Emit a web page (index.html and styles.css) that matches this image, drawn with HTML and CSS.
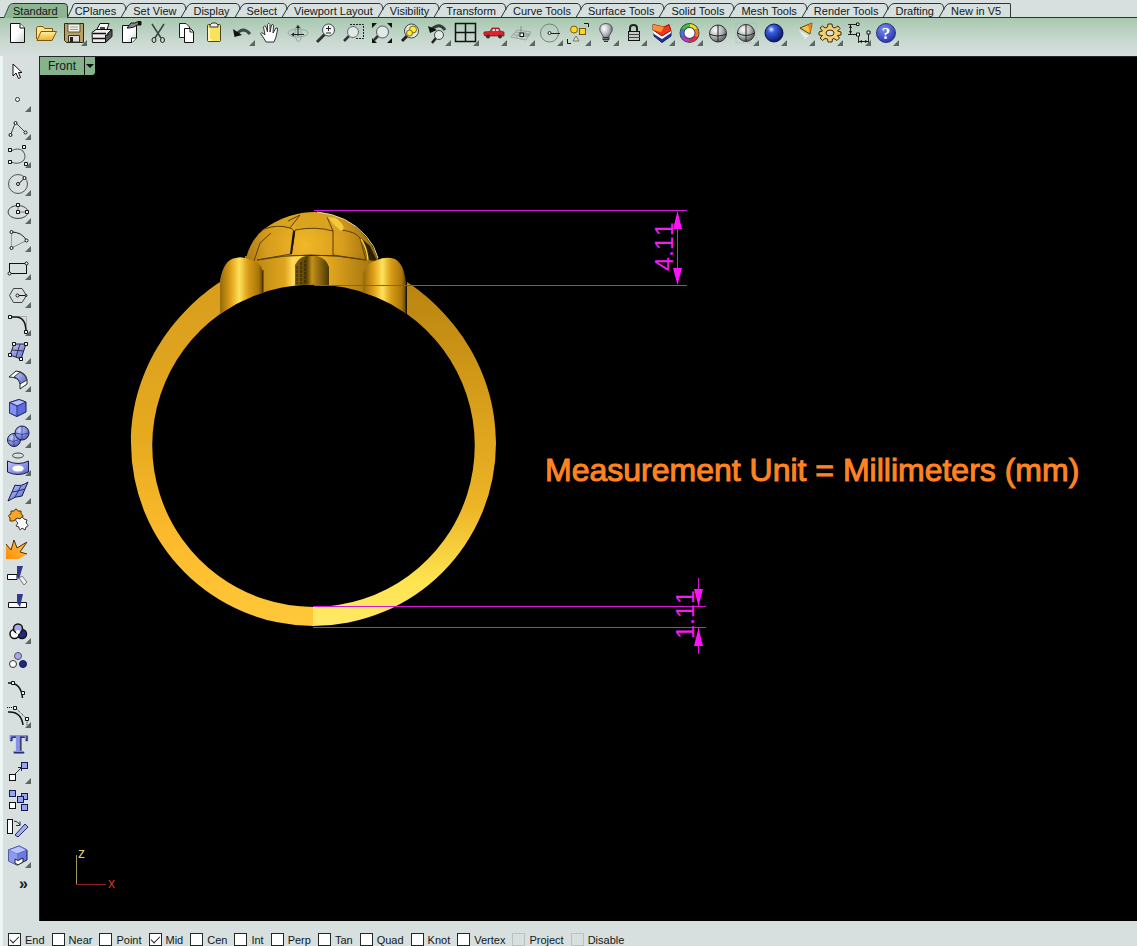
FILE: index.html
```html
<!DOCTYPE html>
<html lang="en">
<head>
<meta charset="utf-8">
<title>Front viewport</title>
<link rel="stylesheet" href="styles.css">
</head>
<body>
<svg class="defs" aria-hidden="true">
  <defs>
    <linearGradient id="blue" x1="0" y1="0" x2="1" y2="1"><stop offset="0" stop-color="#c3caff"/><stop offset="1" stop-color="#5964c8"/></linearGradient>
    <linearGradient id="folder" x1="0" y1="0" x2="0" y2="1"><stop offset="0" stop-color="#fff0a0"/><stop offset="1" stop-color="#eeb030"/></linearGradient>
    <linearGradient id="paper" x1="0" y1="0" x2="1" y2="1"><stop offset=".5" stop-color="#fff"/><stop offset="1" stop-color="#c8d0d0"/></linearGradient>
    <radialGradient id="chrome" cx=".35" cy=".3" r=".8"><stop offset="0" stop-color="#fff"/><stop offset=".5" stop-color="#b4b8b8"/><stop offset="1" stop-color="#444"/></radialGradient>
    <radialGradient id="navy" cx=".35" cy=".3" r=".75"><stop offset="0" stop-color="#e0ecff"/><stop offset=".25" stop-color="#3c60e8"/><stop offset="1" stop-color="#04125c"/></radialGradient>
    <radialGradient id="orb" cx=".35" cy=".3" r=".8"><stop offset="0" stop-color="#c8d0ff"/><stop offset="1" stop-color="#4854b8"/></radialGradient>
    <radialGradient id="help" cx=".4" cy=".3" r=".8"><stop offset="0" stop-color="#7c8cf0"/><stop offset="1" stop-color="#1c2ca0"/></radialGradient>
    <linearGradient id="flame" x1="0" y1="1" x2="1" y2="0"><stop offset="0" stop-color="#ff8a00"/><stop offset="1" stop-color="#ffc850"/></linearGradient>
    <symbol id="sep" viewBox="0 0 17 15"><path d="M0 .5H6Q9.500.5 10 7M5 14.500L11 4Q13 .5 16 .5H17" fill="none" stroke="#26383a"/></symbol>
  </defs>
</svg>

<nav class="tabs" aria-label="Toolbars">
  <svg class="tab-start" viewBox="0 0 9 15" aria-hidden="true"><path d="M0 15L5 3Q6 .5 9 .5V15Z" fill="#8db592"/><path d="M0 14.500L5 3Q6 .5 9 .5" fill="none" stroke="#405048"/></svg>
  <button class="tab tab-active">Standard</button>
  <svg class="sep" viewBox="0 0 17 15" aria-hidden="true"><path d="M0 0H6Q8.500 1 9.500 3V15H0Z" fill="#8db592"/><path d="M0 .5H6Q9.500.5 9.500 4V14.500L14 5Q15 .5 17 .5" fill="none" stroke="#26383a"/></svg>
  <button class="tab">CPlanes</button><svg class="sep"><use href="#sep"/></svg>
  <button class="tab">Set View</button><svg class="sep"><use href="#sep"/></svg>
  <button class="tab">Display</button><svg class="sep"><use href="#sep"/></svg>
  <button class="tab">Select</button><svg class="sep"><use href="#sep"/></svg>
  <button class="tab">Viewport Layout</button><svg class="sep"><use href="#sep"/></svg>
  <button class="tab">Visibility</button><svg class="sep"><use href="#sep"/></svg>
  <button class="tab">Transform</button><svg class="sep"><use href="#sep"/></svg>
  <button class="tab">Curve Tools</button><svg class="sep"><use href="#sep"/></svg>
  <button class="tab">Surface Tools</button><svg class="sep"><use href="#sep"/></svg>
  <button class="tab">Solid Tools</button><svg class="sep"><use href="#sep"/></svg>
  <button class="tab">Mesh Tools</button><svg class="sep"><use href="#sep"/></svg>
  <button class="tab">Render Tools</button><svg class="sep"><use href="#sep"/></svg>
  <button class="tab">Drafting</button><svg class="sep"><use href="#sep"/></svg>
  <button class="tab tab-last">New in V5</button>
</nav>

<div class="toolbar" role="toolbar" aria-label="Standard">
  <button class="tool" aria-label="New"><svg viewBox="0 0 28 28"><path d="M6.500 3.500H16L20.500 8V22.500H6.500Z" fill="url(#paper)" stroke="#111"/><path d="M16 3.500V8H20.500" fill="#fff" stroke="#111"/></svg></button>
  <button class="tool" aria-label="Open"><svg viewBox="0 0 28 28"><path d="M4.500 19V7.500L6 6.500H11L12.500 8.500H20.500V11.500" fill="#ffe48a" stroke="#80580c"/><path d="M5 20.500L9 11.500H24.500L20 20.500Z" fill="url(#folder)" stroke="#80580c"/></svg></button>
  <button class="tool fly" aria-label="Save"><svg viewBox="0 0 28 28"><path d="M4.500 3.500H23.500V22.500H6.500L4.500 20.500Z" fill="#b8a060" stroke="#2c2814"/><path d="M8 4H20V12H8Z" fill="#f4f4ec" stroke="#554"/><path d="M8.500 15.500H19.500V22H8.500Z" fill="#ddd" stroke="#332"/><path d="M10 17H13V22H10Z" fill="#222"/><path d="M10 7H18M10 9.500H18" stroke="#999"/></svg></button>
  <button class="tool" aria-label="Print"><svg viewBox="0 0 28 28"><path d="M8 11L12 3.500H21L18.500 11" fill="#fff" stroke="#111"/><path d="M4 12.500L8 9.500H23.500L20 13V20L17 22.500H4.500Z" fill="#eee" stroke="#111"/><path d="M20 13L24 9.500V16.500L17.500 22.500V15H20Z" fill="#555" stroke="#111"/><path d="M4.500 13.500H18M5 18.500H17M12 8H17" stroke="#111" stroke-width="1.500"/></svg></button>
  <button class="tool" aria-label="Document Properties"><svg viewBox="0 0 28 28"><path d="M6.500 5.500H20.500V18L16 22.500H6.500Z" fill="url(#paper)" stroke="#111"/><path d="M15.500 22.500V18H20.500" fill="#fff" stroke="#111"/><path d="M11 8L15 3H19L22 1.500H25V5H21L18 7L13 8Z" fill="#888" stroke="#111"/><path d="M22 2H25V5H22Z" fill="#111"/></svg></button>
  <button class="tool" aria-label="Cut"><svg viewBox="0 0 28 28"><path d="M8 4L17 18M20 4L11 18" stroke="#3a4444" stroke-width="1.500"/><ellipse cx="10" cy="20" rx="2" ry="2.500" fill="none" stroke="#222"/><ellipse cx="18.500" cy="20" rx="2" ry="2.500" fill="none" stroke="#222"/></svg></button>
  <button class="tool" aria-label="Copy"><svg viewBox="0 0 28 28"><path d="M7.500 3.500H14L17.500 7V17.500H7.500Z" fill="#fff" stroke="#222"/><path d="M12.500 8.500H18.500L21.500 11.500V22.500H12.500Z" fill="#fff" stroke="#111"/><path d="M18 8.500V12H21.500" fill="none" stroke="#222"/></svg></button>
  <button class="tool" aria-label="Paste"><svg viewBox="0 0 28 28"><rect x="7.500" y="4.500" width="13" height="17" rx="1" fill="#f8e45c" stroke="#4c4410"/><path d="M10 7V5L12 3H16L18 5V7Z" fill="#eee" stroke="#333"/><path d="M9 8V20H12" fill="none" stroke="#fff8b8" stroke-width="2"/></svg></button>
  <button class="tool fly" aria-label="Undo"><svg viewBox="0 0 28 28"><path d="M9 14Q15 6 22 14" fill="none" stroke="#3c4848" stroke-width="3"/><path d="M5 9L6.500 17L14 15Z" fill="#111"/></svg></button>
  <button class="tool" aria-label="Pan"><svg viewBox="0 0 28 28"><path d="M10 22L7 17L4.500 13.500Q5.500 11.500 8 14L9 15L7.500 7Q8.500 4.500 10 7L11.500 12V4.500Q13 2 14 4.500V12L15.500 5Q17 3 17.500 6L17 13L20 8Q22 7 21.500 10L20 17L18 22Z" fill="#fff" stroke="#333"/></svg></button>
  <button class="tool" aria-label="Rotate View"><svg viewBox="0 0 28 28"><path d="M13 5Q9 12 13 21Q18 23 17 13Q17 5 13 5Z" fill="none" stroke="#9aa8a4"/><ellipse cx="14" cy="13" rx="10" ry="4" fill="none" stroke="#9aa8a4"/><path d="M14 8V16M10 14.500H20" stroke="#222"/><path d="M12 8L14 5L16 8ZM10 12.500V16.500L7 14.500Z" fill="#222"/></svg></button>
  <button class="tool" aria-label="Zoom"><svg viewBox="0 0 28 28"><path d="M13 14L5 22" stroke="#333" stroke-width="3"/><circle cx="16.500" cy="10" r="6" fill="#edf4f1" stroke="#445"/><path d="M14 8.500H19M16.500 6V11M14 13H19" stroke="#222"/></svg></button>
  <button class="tool" aria-label="Zoom Window"><svg viewBox="0 0 28 28"><path d="M10 4.500H23.500V18.500H16" fill="none" stroke="#222" stroke-dasharray="2 1"/><path d="M9 16L4 21" stroke="#333" stroke-width="2.500"/><circle cx="13" cy="12" r="5.500" fill="#dfeae4" stroke="#667"/></svg></button>
  <button class="tool" aria-label="Zoom Extents"><svg viewBox="0 0 28 28"><path d="M10 16L6 20" stroke="#333" stroke-width="2.500"/><circle cx="14.500" cy="12" r="6" fill="#dfeae4" stroke="#556"/><path d="M4 3H9L4 8ZM24 3H19L24 8ZM4 23H9L4 18ZM24 23H19L24 18Z" fill="#111"/></svg></button>
  <button class="tool" aria-label="Zoom Selected"><svg viewBox="0 0 28 28"><path d="M12 15L6 21" stroke="#222" stroke-width="3"/><circle cx="15.500" cy="11" r="7" fill="#dde6d8" stroke="#445"/><circle cx="17" cy="9.500" r="3.500" fill="#ffe93c" stroke="#7a6c10"/><circle cx="13.500" cy="13" r="3" fill="#ffe93c" stroke="#7a6c10"/></svg></button>
  <button class="tool fly" aria-label="Undo View Change"><svg viewBox="0 0 28 28"><path d="M8 9Q16 2 21 10" fill="none" stroke="#333c3c" stroke-width="3"/><path d="M4 6L6 13L13 10Z" fill="#111"/><path d="M12 18L8 23" stroke="#222" stroke-width="2.500"/><circle cx="15" cy="15" r="4.500" fill="#dfeae4" stroke="#445"/></svg></button>
  <button class="tool fly" aria-label="Four Viewports"><svg viewBox="0 0 28 28"><rect x="3.500" y="3.500" width="20" height="18" fill="none" stroke="#111" stroke-width="1.500"/><path d="M13.500 3V22M3 12.500H24" stroke="#111" stroke-width="1.500"/></svg></button>
  <button class="tool fly" aria-label="Set View"><svg viewBox="0 0 28 28"><path d="M4 15V12L10 11.500L12 8H19L20 11L24 12V16H5Z" fill="#e0222c" stroke="#7c0c14" stroke-width=".7"/><path d="M12 11L13 9H15V11ZM16 9H18.500V11H16Z" fill="#d6e4e4"/><circle cx="8" cy="16.500" r="2" fill="#333"/><circle cx="20" cy="16.500" r="2" fill="#333"/></svg></button>
  <button class="tool fly" aria-label="Set CPlane"><svg viewBox="0 0 28 28"><path d="M9 10L23 12L18 20L3 17ZM7 12L22 14M5 14.500L20 17M13 10.500L8 18M18 11.500L13 19" fill="none" stroke="#9aa6a4"/><rect x="12" y="13" width="3.500" height="3.500" fill="#fff" stroke="#111"/><path d="M13 11V6M16 15H22" stroke="#888"/></svg></button>
  <button class="tool fly" aria-label="Object Snap"><svg viewBox="0 0 28 28"><circle cx="13.500" cy="13" r="9" fill="none" stroke="#77817f"/><path d="M15 13.500H24" stroke="#222"/><circle cx="13.500" cy="13" r="1.500" fill="#fff" stroke="#222"/></svg></button>
  <button class="tool fly" aria-label="Select"><svg viewBox="0 0 28 28"><circle cx="10" cy="9.500" r="3.500" fill="#ffd51e" stroke="#776010"/><rect x="15.500" y="8.500" width="6" height="6" fill="#ffd51e" stroke="#775010"/><path d="M12 16L15 21H9Z" fill="#eee0b0" stroke="#777"/><path d="M20 3.500H24.500V7M3.500 19V23.500H7" fill="none" stroke="#111"/></svg></button>
  <button class="tool fly" aria-label="Hide Objects"><svg viewBox="0 0 28 28"><path d="M11 16L8 11Q6.500 4 14 3.500Q21.500 4 20 11L17 16V20H11Z" fill="url(#chrome)" stroke="#556"/><path d="M11 17.500H17M11 19.500H17M12 21.500H16" stroke="#333"/></svg></button>
  <button class="tool fly" aria-label="Lock Objects"><svg viewBox="0 0 28 28"><path d="M10 12V8Q10 5 13.500 5T17 8V12" fill="none" stroke="#222" stroke-width="2"/><rect x="8.500" y="11.500" width="11" height="9" fill="#c4cac8" stroke="#111"/><path d="M8 14.500H20M8 17.500H20" stroke="#444"/></svg></button>
  <button class="tool fly" aria-label="Layers"><svg viewBox="0 0 28 28"><path d="M6 13L13 18L23 11V16L14 22.500L6 16Z" fill="#24319a" stroke="#111850"/><path d="M5 10L14 16L23 10V13L14 19L6 14Z" fill="#fff"/><path d="M5 4.500L16 7L21 4.500L23 10.500L14 16L5 10Z" fill="#f0381c" stroke="#8a1408"/><path d="M5 4.500L16 7L13 12L5 10Z" fill="#ff8e30"/></svg></button>
  <button class="tool fly" aria-label="Object Properties"><svg viewBox="0 0 28 28" fill="none" stroke-width="3"><circle cx="13.500" cy="13" r="7.500" fill="#fff" stroke="#444" stroke-width="5"/><path d="M13.500 5.500A7.500 7.500 0 0 1 20 9.250" stroke="#f1dc28"/><path d="M20 9.250A7.500 7.500 0 0 1 20 16.750" stroke="#f47a28"/><path d="M20 16.750A7.500 7.500 0 0 1 13.500 20.500" stroke="#e42652"/><path d="M13.500 20.500A7.500 7.500 0 0 1 7 16.750" stroke="#b836cc"/><path d="M7 16.750A7.500 7.500 0 0 1 7 9.250" stroke="#3b74e8"/><path d="M7 9.250A7.500 7.500 0 0 1 13.500 5.500" stroke="#36c24c"/></svg></button>
  <button class="tool" aria-label="Shade"><svg viewBox="0 0 28 28"><circle cx="14" cy="13.500" r="8.500" fill="url(#chrome)" stroke="#333"/><path d="M14 5V22M5.500 14Q14 18 22.500 14" fill="none" stroke="#222"/></svg></button>
  <button class="tool fly" aria-label="Shaded Viewport"><svg viewBox="0 0 28 28"><path d="M4 3H24V23H4Z" fill="none" stroke="#aab8b2" stroke-dasharray="1 1"/><circle cx="14" cy="13" r="8.500" fill="url(#chrome)" stroke="#333"/><path d="M14 5V21M5.500 13Q14 18 22.500 13" fill="none" stroke="#222"/></svg></button>
  <button class="tool fly" aria-label="Render"><svg viewBox="0 0 28 28"><circle cx="14" cy="13" r="9" fill="url(#navy)" stroke="#0a1444"/></svg></button>
  <button class="tool fly" aria-label="Lights"><svg viewBox="0 0 28 28"><path d="M12 8L24 3L22 14Z" fill="#ffc43e" stroke="#554020"/><path d="M20 5L24 3L22 14Z" fill="#f08418"/><path d="M10 9L21 16L17 19Z" fill="#f4f4ea" opacity=".7"/></svg></button>
  <button class="tool fly" aria-label="Options"><svg viewBox="0 0 28 28"><path d="M12 4H16L16.500 7L19 8L22 6L24 8.500L21.500 11L25 12V15L21.500 15.500L23.500 18L21 20.500L18 18.500L16.500 19L16 22H12L11.500 19L9 18.500L6.500 20.500L4 18L6.500 15.500L3 15V12L6.500 11L4 8L6.500 6L9 8L11.500 7Z" fill="#f2cf72" stroke="#3c2e08"/><ellipse cx="14" cy="13" rx="4" ry="3" fill="#d7e0dc" stroke="#3c2e08"/></svg></button>
  <button class="tool fly" aria-label="Dimensions"><svg viewBox="0 0 28 28"><path d="M4 4.500H14M6.500 5V14M4 14.500H14.500V23M24.500 11V23M15 21.500H24" fill="none" stroke="#222" stroke-width="1"/><path d="M5 8L6.500 5L8 8ZM5 11L6.500 14L8 11ZM18 20V23L15 21.500ZM21 20V23L24 21.500Z" fill="#111"/><path d="M12.500 3H15V5.500H12.500ZM12.500 13H15.500V16H12.500ZM23 11H26V14H23Z" fill="#fff" stroke="#111"/></svg></button>
  <button class="tool fly" aria-label="Help"><svg viewBox="0 0 28 28"><circle cx="14" cy="13" r="9.500" fill="url(#help)" stroke="#2a3580"/><text class="q" x="14" y="19" text-anchor="middle">?</text></svg></button>
</div>

<div class="side" role="toolbar" aria-label="Main" aria-orientation="vertical">
  <button class="tool" aria-label="Cancel"><svg viewBox="0 0 28 28"><path d="M9 6V18L12 15L14.500 20.500L16.500 19.500L14.500 14.500H18Z" fill="#fff" stroke="#111"/></svg></button>
  <button class="tool fly" aria-label="Point"><svg viewBox="0 0 28 28"><circle cx="13.500" cy="13.500" r="2" fill="#fff" stroke="#333"/></svg></button>
  <button class="tool fly" aria-label="Polyline"><svg viewBox="0 0 28 28"><path d="M6.500 21L11.500 8.500L21.500 18.500" fill="none" stroke="#444"/><g fill="#fff" stroke="#111"><circle cx="6.500" cy="21" r="1.500"/><circle cx="11.500" cy="9" r="1.500"/><circle cx="21.500" cy="18.500" r="1.500"/></g></svg></button>
  <button class="tool fly" aria-label="Curve"><svg viewBox="0 0 28 28"><path d="M7 9Q14 5 19 9Q23 15 19 19Q14 23 7 20" fill="none" stroke="#555"/><path d="M4.500 6.500H7.500V9.500H4.500ZM18.500 3.500H21.500V6.500H18.500ZM4.500 18.500H7.500V21.500H4.500ZM20.500 20.500H23.500V23.500H20.500Z" fill="#fff" stroke="#111"/></svg></button>
  <button class="tool fly" aria-label="Circle"><svg viewBox="0 0 28 28"><circle cx="14" cy="14" r="9.500" fill="none" stroke="#555"/><path d="M14.500 14L20.500 8" stroke="#111"/><circle cx="14" cy="14" r="1.500" fill="#fff" stroke="#111"/><circle cx="20.500" cy="8" r="1.500" fill="#fff" stroke="#111"/></svg></button>
  <button class="tool fly" aria-label="Ellipse"><svg viewBox="0 0 28 28"><ellipse cx="14" cy="14" rx="10" ry="6.500" fill="none" stroke="#444"/><path d="M14 8V14H22" fill="none" stroke="#777"/><path d="M12.500 5.500H15.500V8.500H12.500ZM12.500 12.500H15.500V15.500H12.500ZM21.500 12.500H24.500V15.500H21.500Z" fill="#fff" stroke="#111"/></svg></button>
  <button class="tool fly" aria-label="Arc"><svg viewBox="0 0 28 28"><path d="M7.500 22V6" stroke="#999"/><path d="M7.500 6Q18 6 22.500 14.500" fill="none" stroke="#222"/><path d="M7.500 22L22.500 14.500" stroke="#888"/><g fill="#fff" stroke="#111"><circle cx="7.500" cy="6" r="1.500"/><circle cx="7.500" cy="22" r="1.500"/><circle cx="22.500" cy="14.500" r="1.500"/></g></svg></button>
  <button class="tool fly" aria-label="Rectangle"><svg viewBox="0 0 28 28"><rect x="5.500" y="9.500" width="17" height="10" fill="none" stroke="#111"/><circle cx="22.500" cy="9.500" r="1.500" fill="#fff" stroke="#111"/><circle cx="5.500" cy="19.500" r="1.500" fill="#fff" stroke="#111"/></svg></button>
  <button class="tool fly" aria-label="Polygon"><svg viewBox="0 0 28 28"><path d="M5.500 13.500L9.500 6.500H18L22.500 13.500L18 20.500H9.500Z" fill="none" stroke="#444"/><path d="M14 13.500H22" stroke="#111"/><circle cx="13.500" cy="13.500" r="1.500" fill="#fff" stroke="#111"/><circle cx="22" cy="13.500" r="1" fill="#fff" stroke="#111"/></svg></button>
  <button class="tool fly" aria-label="Fillet"><svg viewBox="0 0 28 28"><path d="M14 6.500H22.500V16" fill="none" stroke="#aaa"/><path d="M6 7H13Q22 8 22 22" fill="none" stroke="#111" stroke-width="1.500"/><path d="M4.500 5.500H7.500V8.500H4.500ZM20.500 20.500H23.500V23.500H20.500Z" fill="#fff" stroke="#111"/></svg></button>
  <button class="tool fly" aria-label="Surface"><svg viewBox="0 0 28 28"><path d="M10 6L22 6L17 21L6 17Z" fill="url(#blue)" stroke="#223"/><path d="M16 6L12 19M8 12L20 13" stroke="#334"/><path d="M8.500 4.500H11.500V7.500H8.500ZM20.500 4.500H23.500V7.500H20.500ZM4.500 15.500H7.500V18.500H4.500ZM15.500 19.500H18.500V22.500H15.500Z" fill="#fff" stroke="#111"/></svg></button>
  <button class="tool fly" aria-label="Surface Fillet"><svg viewBox="0 0 28 28"><path d="M5 11L12 5Q22 6 23 14V18L16 23V17Q14 11 5 11Z" fill="#fff" stroke="#222"/><path d="M10 11L16 6Q22 9 23 14L16 18Q15 12 10 11Z" fill="url(#blue)" stroke="#334"/></svg></button>
  <button class="tool fly" aria-label="Box"><svg viewBox="0 0 28 28"><path d="M5.500 8.500L15 5.500L22 8V18L13 22.500L5.500 19Z" fill="#5c6ae0" stroke="#151c58"/><path d="M5.500 8.500L15 5.500L22 8L13 12Z" fill="#b7c0ff" stroke="#26307c"/><path d="M5.500 8.500L13 12V22.500L5.500 19Z" fill="#8290f4" stroke="#26307c"/></svg></button>
  <button class="tool fly" aria-label="Boolean Union"><svg viewBox="0 0 28 28"><circle cx="10" cy="18" r="6.500" fill="url(#orb)" stroke="#111a50"/><circle cx="18" cy="11" r="7" fill="url(#orb)" stroke="#111a50"/><path d="M18 4V18M11 11Q18 14 25 11M4 18Q9 21 14 18M10 12V24" fill="none" stroke="#26307c" stroke-width=".7"/></svg></button>
  <button class="tool fly" aria-label="Project"><svg viewBox="0 0 28 28"><ellipse cx="14" cy="5.500" rx="5.500" ry="2.500" fill="none" stroke="#444"/><path d="M3.500 11Q14 16 24.500 11V22Q14 27 3.500 22Z" fill="url(#blue)" stroke="#111a50"/><ellipse cx="14" cy="18.500" rx="6" ry="3.500" fill="#fff" stroke="#aab"/></svg></button>
  <button class="tool fly" aria-label="Surface from Grid"><svg viewBox="0 0 28 28"><path d="M11 7Q17 9 24 4L18 18Q11 18 4 23Z" fill="url(#blue)" stroke="#111a50"/><path d="M17 8L11 19M8 14Q15 13 21 11" fill="none" stroke="#26307c"/></svg></button>
  <button class="tool" aria-label="Join"><svg viewBox="0 0 28 28"><path d="M5 5H8Q10 1 12 5H15V8Q19 10 15 12V15H12Q10 11 8 15H4V12Q1 9 5 8Z" transform="translate(2 0)" fill="#f8a526" stroke="#543004"/><path d="M13 12L16 13Q18 9 20 13L23 14L22 17Q26 20 22 21L21 24L18 22Q15 26 15 21L12 20L14 17Q10 14 13 12Z" fill="#fff" stroke="#333"/></svg></button>
  <button class="tool" aria-label="Explode"><svg viewBox="0 0 28 28"><path d="M2 25V10L7 16L10 6L13 14L23 8L16 18L23 20L15 25Z" fill="url(#flame)"/><path d="M2 10L7 16L10 6L13 14L23 8L16 18L23 20" fill="none" stroke="#512c04"/></svg></button>
  <button class="tool" aria-label="Trim"><svg viewBox="0 0 28 28"><path d="M3.500 12.500H13V17.500H3.500Z" fill="#fff" stroke="#111"/><path d="M15 16L18 14L23 20L20 23Z" fill="#eee" stroke="#777"/><path d="M13 4H19L15 17L13 15Z" fill="#303890"/></svg></button>
  <button class="tool" aria-label="Split"><svg viewBox="0 0 28 28"><path d="M4.500 12.500H22.500V17.500H4.500Z" fill="#fff" stroke="#111"/><path d="M13 4H19L16 17L13 13Z" fill="#303890"/></svg></button>
  <button class="tool fly" aria-label="Group"><svg viewBox="0 0 28 28" stroke="#111" stroke-width="1.500"><circle cx="18" cy="16" r="4.500" fill="#202a80"/><circle cx="10.500" cy="16" r="4.500" fill="#fff"/><circle cx="14" cy="10.500" r="4.500" fill="#a6a8ec"/><circle cx="14" cy="14" r="2" fill="#fff" stroke="none"/></svg></button>
  <button class="tool" aria-label="Ungroup"><svg viewBox="0 0 28 28"><circle cx="14" cy="10" r="3.500" fill="#a6a8ec" stroke="#556"/><circle cx="9" cy="18" r="3.500" fill="#fff" stroke="#333"/><circle cx="19" cy="18" r="3.500" fill="#202a80" stroke="#111a50"/></svg></button>
  <button class="tool" aria-label="Edit Points"><svg viewBox="0 0 28 28"><path d="M4 9Q17 8 18.500 24" fill="none" stroke="#111" stroke-width="1.500"/><path d="M7.500 7.500H10.500V10.500H7.500ZM17.500 17.500H20.500V20.500H17.500Z" fill="#fff" stroke="#111"/></svg></button>
  <button class="tool fly" aria-label="Control Points"><svg viewBox="0 0 28 28"><path d="M3 5.500H11L23 17V24" fill="none" stroke="#111" stroke-dasharray="1 1"/><path d="M4 10Q17 9 19 23" fill="none" stroke="#111" stroke-width="1.500"/><path d="M9.500 4.500H12.500V7.500H9.500ZM21.500 15.500H24.500V18.500H21.500Z" fill="#fff" stroke="#111"/></svg></button>
  <button class="tool" aria-label="Text"><svg viewBox="0 0 28 28"><text class="t t-back" x="15" y="23" text-anchor="middle">T</text><text class="t" x="14" y="22" text-anchor="middle">T</text></svg></button>
  <button class="tool fly" aria-label="Move"><svg viewBox="0 0 28 28"><path d="M11 16L17 10" stroke="#333"/><path d="M14 9.500H17.500V13" fill="none" stroke="#222"/><rect x="17.500" y="4.500" width="6" height="6" fill="#98a4f0" stroke="#111a50"/><rect x="5.500" y="16.500" width="6" height="6" fill="#fff" stroke="#111"/></svg></button>
  <button class="tool" aria-label="Copy Objects"><svg viewBox="0 0 28 28" fill="#98a4f0" stroke="#111a50"><rect x="5.500" y="4.500" width="6" height="6"/><rect x="17.500" y="7.500" width="6" height="6"/><rect x="13.500" y="10.500" width="6" height="6"/><rect x="17.500" y="18.500" width="6" height="6"/><rect x="5.500" y="16.500" width="6" height="6" fill="#fff" stroke="#111"/></svg></button>
  <button class="tool" aria-label="Rotate"><svg viewBox="0 0 28 28"><rect x="3.500" y="5.500" width="5" height="14" fill="#fff" stroke="#111"/><path d="M10 7Q14 7 16 11M16 7.500V11.500H12" fill="none" stroke="#333"/><path d="M11 21L21 10L24 13L14 23Z" fill="#a4aef4" stroke="#222a60"/></svg></button>
  <button class="tool fly" aria-label="Solid Editing"><svg viewBox="0 0 28 28"><path d="M4.500 8L15 4L23 8V18L13 23L4.500 19Z" fill="#6a7ae0" stroke="#151c58"/><path d="M4.500 8L15 4L23 8L13 12Z" fill="#bcc4ff" stroke="#5a68c8"/><path d="M4.500 8L13 12V23L4.500 19Z" fill="#8c9af0"/><path d="M11 17L14 18.500L19 16V20L14 23L11 21Z" fill="#fff" stroke="#222"/></svg></button>
  <button class="tool more" aria-label="More tools">»</button>
</div>

<main class="viewport">
  <svg class="scene" viewBox="39 56 1098 865" preserveAspectRatio="xMinYMin meet" role="img" aria-label="Gold ring, front view, with dimensions in millimeters">
    <defs>
      <linearGradient id="bandL" gradientUnits="userSpaceOnUse" x1="0" y1="282" x2="0" y2="626"><stop offset="0" stop-color="#d89d1c"/><stop offset=".45" stop-color="#e6aa20"/><stop offset=".75" stop-color="#fcbb2c"/><stop offset="1" stop-color="#ffc83a"/></linearGradient>
      <linearGradient id="bandR" gradientUnits="userSpaceOnUse" x1="0" y1="282" x2="0" y2="626"><stop offset="0" stop-color="#b98410"/><stop offset=".4" stop-color="#dca21c"/><stop offset=".65" stop-color="#ecb426"/><stop offset=".87" stop-color="#ffe450"/><stop offset="1" stop-color="#ffe868"/></linearGradient>
      <linearGradient id="prong" x1="0" x2="1" y1="0" y2="0"><stop offset="0" stop-color="#94680a"/><stop offset=".25" stop-color="#e0a018"/><stop offset=".45" stop-color="#ffe25a"/><stop offset=".65" stop-color="#d99c18"/><stop offset=".9" stop-color="#a87508"/><stop offset="1" stop-color="#5c3e04"/></linearGradient>
      <linearGradient id="mid" x1="0" x2="1" y1="0" y2="0"><stop offset="0" stop-color="#806010"/><stop offset=".35" stop-color="#5a4206"/><stop offset=".5" stop-color="#c49018"/><stop offset="1" stop-color="#4c3604"/></linearGradient>
      <linearGradient id="wall" x1="0" x2="1" y1="0" y2="0"><stop offset="0" stop-color="#b07c0c"/><stop offset=".3" stop-color="#e0a51e"/><stop offset=".36" stop-color="#ffd956"/><stop offset=".6" stop-color="#e8ac20"/><stop offset="1" stop-color="#9a6c0c"/></linearGradient>
      <radialGradient id="dome" gradientUnits="userSpaceOnUse" cx="305" cy="245" r="78"><stop offset="0" stop-color="#f2b828"/><stop offset=".5" stop-color="#d69c1c"/><stop offset=".8" stop-color="#a87610"/><stop offset="1" stop-color="#6c4a08"/></radialGradient>
      <clipPath id="above"><path d="M120 200H510V446H475A161.500 161.500 0 0 0 152 446H120Z"/></clipPath>
    </defs>
    <path d="M220 282C180 308 131 364 131 443A183 183 0 0 0 313 626V607A161.500 161.500 0 0 1 220 314Z" fill="url(#bandL)"/>
    <path d="M407 282C447 308 496 364 496 443A183 183 0 0 1 313 626V607A161.500 161.500 0 0 0 407 314Z" fill="url(#bandR)"/>
    <g clip-path="url(#above)">
      <path d="M245 256H378V310H245Z" fill="url(#wall)"/>
      <path d="M245 262Q250 240 264 229Q288 212 315 212Q346 214 364 235Q376 248 378 262Q345 254 312 255Q278 255 245 262Z" fill="url(#dome)"/>
      <path d="M272 231Q284 215 298 215L290 228ZM298 216Q322 210 335 222Q340 230 332 230Q312 227 295 229Z" fill="#daa31e"/>
      <path d="M264 229Q278 224 290 228L300 215M290 228Q296 230 294 236L291 254L257 260M291 254L293 244L295 230Q316 226 333 231V255M300 215L288 221M333 231L327 217L342 230Q356 232 360 238L366 260L333 255M271 233L260 243L254 261M257 260Q310 250 366 260" fill="none" stroke="#593e08"/>
      <path d="M294 231L291 254" stroke="#171002" stroke-width="2"/>
      <path d="M361 238L370 246L377 261L368 260Z" fill="#2c2004"/>
      <path d="M361 239Q367 248 368 260" fill="none" stroke="#f0cf32" stroke-width="1.500"/>
      <path d="M317 212Q348 215 366 236Q375 246 378 258" fill="none" stroke="#e8dda0"/>
      <path d="M336 218Q348 228 341 231Q335 226 327 217Z" fill="#f3ca3e"/>
      <path d="M295 288V265Q299 257 306 256H317Q326 258 329 267V288Z" fill="url(#mid)"/>
      <path d="M297 266V284M301 262V284M305 260V284" stroke="#2c2004" stroke-dasharray="3 1"/>
      <path d="M220 322V280Q224 259 236 258Q243 256 250 260Q261 262 263 272V322Z" fill="url(#prong)"/>
      <path d="M363 322V274Q366 263 377 260Q386 256 395 259Q404 264 406 283V322Z" fill="url(#prong)"/>
      <path d="M263 270V292M406 284V315" stroke="#352502"/>
    </g>
    <g class="dims">
      <path d="M314 210.500H687M314 285.500H687M677.500 212V284M313 606.500H706M313 627.500H706M698.500 578V606M698.500 628V654" fill="none" stroke="#d417d8" shape-rendering="crispEdges"/>
      <path d="M677.500 211L682 229H673ZM677.500 285L682 268H673ZM698.500 606L703 589H694ZM698.500 628L703 646H694Z" fill="#ff10ff"/>
      <text transform="translate(673 271) rotate(-90)">4.11</text>
      <text transform="translate(694 639) rotate(-90)">1.11</text>
    </g>
    <text class="unit" x="545" y="481">Measurement Unit = Millimeters (mm)</text>
    <path d="M76.500 855V885" stroke="#a39c50"/><path d="M76 884.500H106" stroke="#8c2020"/>
    <text class="axis axis-z" x="78" y="858">z</text>
    <text class="axis axis-x" x="108" y="888">x</text>
  </svg>
  <div class="title"><span class="title-name">Front</span><button class="title-menu" aria-label="Viewport menu"><svg viewBox="0 0 10 16"><path d="M1 6H9L5 10Z" fill="#111"/></svg></button></div>
</main>

<form class="osnap" aria-label="Object snaps">
  <label><input type="checkbox" checked>End</label>
  <label><input type="checkbox">Near</label>
  <label><input type="checkbox">Point</label>
  <label><input type="checkbox" checked>Mid</label>
  <label><input type="checkbox">Cen</label>
  <label><input type="checkbox">Int</label>
  <label><input type="checkbox">Perp</label>
  <label><input type="checkbox">Tan</label>
  <label><input type="checkbox">Quad</label>
  <label><input type="checkbox">Knot</label>
  <label><input type="checkbox">Vertex</label>
  <label><input type="checkbox" disabled>Project</label>
  <label><input type="checkbox" disabled>Disable</label>
</form>
</body>
</html>
```

FILE: styles.css
```css
* { box-sizing: border-box; }

body {
  margin: 0;
  height: 100vh;
  overflow: hidden;
  display: grid;
  grid-template-columns: 39px 1fr;
  grid-template-rows: 18px 38px 1fr 25px;
  background: #d7dfdf;
  color: #10191a;
  font: 11px/14px "Liberation Sans", Arial, sans-serif;
}

button {
  margin: 0;
  padding: 0;
  border: 0;
  background: none;
  color: inherit;
  font: inherit;
}

.defs { position: absolute; width: 0; height: 0; }

.tabs {
  grid-column: 1 / -1;
  display: flex;
  align-items: stretch;
  padding: 3px 0 0 4px;
  border-bottom: 1px solid #26383a;
}
.tab {
  flex: 0 0 auto;
  border-top: 1px solid #26383a;
  white-space: nowrap;
}
.tab-active { background: #8db592; }
.tab-start { width: 9px; height: 15px; flex: none; }
.tab-last { padding-right: 9px; border-right: 1px solid #26383a; border-top-right-radius: 2px; }
.sep { width: 17px; height: 15px; flex: none; }

.toolbar {
  grid-column: 1 / -1;
  display: flex;
  align-items: flex-start;
  padding: 2px 4px 0;
  background: linear-gradient(#a8c8b0, #c9d9d0 60%, #d7dfdf);
}
.tool {
  position: relative;
  flex: none;
  width: 28px;
  height: 28px;
}
.tool svg { display: block; width: 28px; height: 28px; }
.fly::after {
  content: "";
  position: absolute;
  right: 1px;
  bottom: 2px;
  width: 6px;
  height: 6px;
  background: #5c6664;
  clip-path: polygon(100% 0, 100% 100%, 0 100%);
}
.q { font: bold 17px "Liberation Serif", serif; fill: #fff; }
.t { font: bold 26px "Liberation Serif", serif; fill: #8793e8; }
.t-back { fill: #27306e; stroke: #27306e; stroke-width: 1; }
.more { font-size: 16px; font-weight: bold; line-height: 24px; text-align: right; padding-right: 4px; }

.side {
  grid-row: 3 / 5;
  display: flex;
  flex-direction: column;
  padding: 2px 0 0 1px;
  border-left: 3px solid #edf4f4;
}

.viewport {
  position: relative;
  overflow: hidden;
  background: #000;
  border: 1px solid #20282a;
  border-width: 1px 0 0 1px;
}
.scene { position: absolute; top: -1px; left: -1px; width: calc(100% + 1px); height: calc(100% + 1px); }
.title {
  position: absolute;
  top: 0;
  left: 0;
  display: flex;
  align-items: center;
  height: 18px;
  padding-left: 8px;
  gap: 8px;
  background: #86b38c;
  border-radius: 0 0 3px 0;
  font-size: 12px;
}
.title-menu { width: 11px; height: 18px; border-left: 1px solid #111; }
.title-menu svg { display: block; width: 10px; height: 16px; }

.dims text { font: 25px "Liberation Sans", Arial, sans-serif; font-kerning: none; fill: #f41cf4; }
.unit { font: 32px "Liberation Sans", Arial, sans-serif; fill: #ff8420; stroke: #ff8420; stroke-width: 1; }
.axis { font: 14px "Liberation Sans", Arial, sans-serif; }
.axis-z { fill: #d8d070; }
.axis-x { fill: #c83420; }

.osnap {
  grid-column: 2;
  margin-left: -31px;
  display: flex;
  align-items: flex-start;
  gap: 7px;
  padding-top: 12px;
}
.osnap label { display: flex; align-items: center; gap: 4px; height: 13px; }
.osnap input {
  appearance: none;
  width: 13px;
  height: 13px;
  margin: 0;
  border: 1px solid #20282a;
  background: #fff;
}
.osnap input:checked {
  display: grid;
  place-items: center;
}
.osnap input:checked::after {
  content: "";
  width: 8px;
  height: 4px;
  margin-bottom: 2px;
  border: solid #222;
  border-width: 0 0 1px 1px;
  transform: rotate(-45deg);
}
.osnap input:disabled { background: #d7dfdf; border-color: #b8c2c2; }
```
